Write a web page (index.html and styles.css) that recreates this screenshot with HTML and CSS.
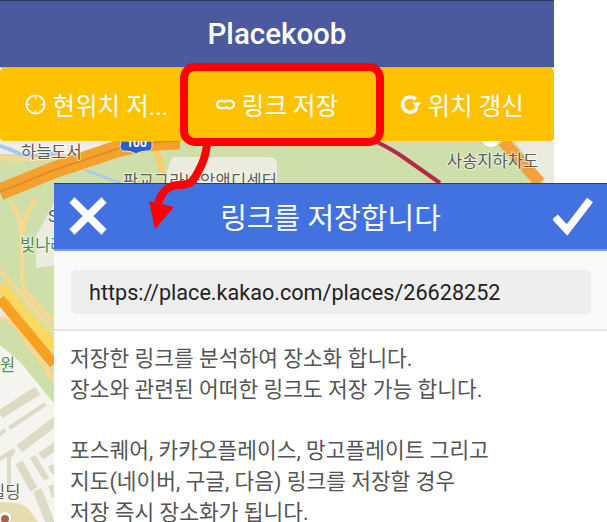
FILE: index.html
```html
<!DOCTYPE html>
<html lang="ko">
  <head>
    <meta charset="UTF-8" />
    <title>Placekoob</title>
    <link rel="stylesheet" href="styles.css">
  </head>
  <body>
    <main class="screen">
      <section class="app">
        <header class="app-header">Placekoob</header>

        <nav class="toolbar">
          <button class="tool tool-first">
            <svg class="tool-icon" viewBox="0 0 22 22" fill="none" stroke="#fff">
              <circle cx="11" cy="11" r="9.500" stroke-width="1.800" />
              <path d="M11 1v4M11 17v4M1 11h4M17 11h4" stroke-width="1.600" />
            </svg>
            <span>현위치 저...</span>
          </button>
          <button class="tool">
            <svg class="tool-icon link-icon" viewBox="0 0 18 10" fill="none" stroke="#fff" stroke-width="2.200">
              <path d="M8 1.500H4.500a3.500 3.500 0 0 0 0 7H8a3 3 0 0 0 2.500-2" />
              <path d="M10 8.500h3.500a3.500 3.500 0 0 0 0-7H10a3 3 0 0 0-2.500 2" />
            </svg>
            <span>링크 저장</span>
          </button>
          <button class="tool">
            <svg class="tool-icon" viewBox="0 0 22 22" fill="none">
              <path d="M16.500 5.500a8 8 0 1 0 1.500 9" stroke="#fff" stroke-width="3.600" />
              <path d="M13 9h9l-4.500 6z" fill="#fff" />
            </svg>
            <span>위치 갱신</span>
          </button>
        </nav>

        <div class="map">
          <svg class="map-art" viewBox="0 141 554 381" preserveAspectRatio="none">
            <rect x="0" y="141" width="554" height="381" fill="#cfdfa9" />

            <!-- 지도 바탕 -->
            <path d="M0 141h125l-40 13H0z" fill="#eeeee6" />
            <path d="M0 146q10 3 20 8t40 -2" fill="none" stroke="#a9c8ee" stroke-width="4" />
            <path d="M85 170l35 13" fill="none" stroke="#a9c8ee" stroke-width="2.500" />
            <path d="M172 157h97q8 0 8 8v18H163z" fill="#ecebe0" />
            <path d="M515 141h39v42h-10z" fill="#ecebe0" />
            <path d="M54 203 36 236v32q10-2 18-2z" fill="#ecebe0" />
            <path d="M0 345l20 17 34 41v119H0z" fill="#f5f4ee" />
            <path d="M0 502q20 0 28 6l10 14H0z" fill="#e6dcb2" />
            <path d="M0 304q6 8 14 17l-14-3z" fill="#e7e7df" />

            <!-- 도로 -->
            <g fill="none" stroke="#fbd78e" stroke-width="4">
              <path d="M0 158q40 4 100-6" />
              <path d="M10 200q12 18 12 40v30q0 14 4 22l28 30" />
              <path d="M36 198q-14 20-14 42" />
              <path d="M0 270l54 62" />
              <path d="M0 318q10 2 16 8l38 54" />
            </g>
            <path d="M154 141l9 34" fill="none" stroke="#f3cf72" stroke-width="7" />

            <path d="M0 192 54 170 120 148q30-7 60-7" fill="none" stroke="#f6a02e" stroke-width="17" />
            <path d="M0 192 54 170 120 148q30-7 60-7" fill="none" stroke="#d98a26" stroke-width="1.500" />
            <path d="M0 286l54 61" fill="none" stroke="#fbd85e" stroke-width="11" />
            <path d="M0 299l54 65" fill="none" stroke="#f7a021" stroke-width="10" />

            <path d="M377 142q16 8 26 15l37 26" fill="none" stroke="#b42a45" stroke-width="4" />
            <path d="M503 141l37 42" fill="none" stroke="#f4a238" stroke-width="12" />
            <circle cx="491" cy="138" r="9" fill="#fff" />

            <!-- 블록 -->
            <g fill="none" stroke-linecap="square" class="blocks">
              <path d="M4 412l30-19" stroke-width="9" />
              <path d="M11 427l33-22" stroke-width="4" />
              <path d="M23 446l30-23" stroke-width="9" />
              <path d="M44 454l10-7" stroke-width="8" />
              <path d="M0 434l4-3" stroke-width="4" />
              <path d="M0 459l14-9-5 8v30" stroke-width="4" />
              <path d="M21 466l11 20" stroke-width="8" />
              <path d="M34 459l11 18" stroke-width="6" />
              <path d="M39 494l11 28" stroke-width="9" />
              <path d="M52 468l2 3" stroke-width="6" />
              <path d="M52 488l2 6" stroke-width="6" />
            </g>
            <circle cx="5" cy="518" r="6" fill="#fff" />
            <circle cx="5" cy="519" r="4" fill="#a8654a" />

            <g class="map-label">
              <text x="21" y="158">하늘도서</text>
              <text x="123" y="187" textLength="154">판교그라나앙앤디센터</text>
              <text x="447" y="167">사송지하차도</text>
              <text x="48" y="222">S</text>
              <text x="-10" y="498">빌딩</text>
            </g>
            <g class="map-label map-green">
              <text x="20" y="251">빛나래</text>
              <text x="0" y="371">원</text>
            </g>
            <path d="M121 141h31v6q0 3-3 4-9 0-13 3-4-3-13-3-3-1-3-4z" fill="#2f5fc0" stroke="#dfe6f5" />
            <text class="shield" x="136.500" y="147">100</text>
          </svg>
        </div>
      </section>

      <section class="dialog">
        <header class="dialog-header">
          <svg class="dialog-icon" viewBox="0 0 40 40" stroke="#fff" stroke-width="7.500">
            <path d="M4 4l32 32M36 4 4 36" />
          </svg>
          <h1>링크를 저장합니다</h1>
          <svg class="dialog-icon" viewBox="0 0 40 40" fill="none" stroke="#fff" stroke-width="7.500">
            <path d="M2 21l12 13L37 4" />
          </svg>
        </header>
        <div class="url-row">
          <div class="url-box">https://place.kakao.com/places/26628252</div>
        </div>
        <div class="dialog-body">
          <p>저장한 링크를 분석하여 장소화 합니다.<br>장소와 관련된 어떠한 링크도 저장 가능 합니다.</p>
          <p>포스퀘어, 카카오플레이스, 망고플레이트 그리고<br>지도(네이버, 구글, 다음) 링크를 저장할 경우<br>저장 즉시 장소화가 됩니다.</p>
        </div>
      </section>

      <!-- 빨간 강조 표시 -->
      <div class="callout"></div>
      <svg class="callout-arrow" viewBox="0 0 607 522">
        <path d="M207 145q-2 14-7 23-5 11-10 15-5 2-13 2-9 1-14 8-3 4-5 10" fill="none" stroke="#f00" stroke-width="8" />
        <polygon points="149,201 174,207 155,229" fill="#f00" />
      </svg>
    </main>
  </body>
</html>
```

FILE: styles.css
```css
* {
  box-sizing: border-box;
}

html,
body {
  margin: 0;
  height: 100%;
  background: #fff;
  overflow: hidden;
}

body {
  font-family: Roboto, "Noto Sans CJK KR", sans-serif;
}

.screen {
  position: relative;
  width: 607px;
  height: 522px;
  overflow: hidden;
}

.app {
  display: flex;
  flex-direction: column;
  width: 554px;
  height: 522px;
}

.app-header {
  flex: none;
  height: 68px;
  display: flex;
  align-items: center;
  justify-content: center;
  background: #4b599f;
  border-top: 1px solid #2f3659;
  border-bottom: 1px solid #b9b9b0;
  color: #fff;
  font-size: 29.500px;
  font-weight: 500;
}

.toolbar {
  flex: none;
  display: grid;
  grid-template-columns: repeat(3, 1fr);
  height: 73px;
  background: #ffc200;
  border-radius: 4px;
}

.tool {
  min-width: 0;
  display: flex;
  align-items: center;
  justify-content: center;
  gap: 7px;
  padding: 0;
  background: none;
  border: none;
  color: #fff;
  font-family: inherit;
  font-size: 24.500px;
  white-space: nowrap;
}

.tool-first {
  padding-left: 8px;
}

.tool-icon {
  width: 21px;
  height: 21px;
}

.link-icon {
  width: 19px;
  height: 11px;
}

.map {
  flex: none;
  height: 381px;
  overflow: hidden;
}

.map-art {
  display: block;
  width: 554px;
  height: 381px;
}

.blocks {
  stroke: #dcdbc6;
}

.map-label text {
  font-size: 16.500px;
  fill: #5b5b55;
  stroke: #fff;
  stroke-width: 2px;
  stroke-opacity: 0.6;
  paint-order: stroke;
}

.map-green text {
  fill: #4f8a4f;
}

.shield {
  font-size: 12px;
  font-weight: 700;
  fill: #fff;
  text-anchor: middle;
}

.dialog {
  position: absolute;
  left: 54px;
  top: 183px;
  width: 553px;
  height: 339px;
  background: #fff;
  overflow: hidden;
}

.dialog-header {
  height: 68px;
  padding: 0 14px 2px;
  display: flex;
  align-items: center;
  justify-content: space-between;
  background: #4272e0;
  border-top: 1px solid #2b3f73;
  border-bottom: 2px solid #7d9ce6;
}

.dialog-header h1 {
  margin: 0;
  color: #fff;
  font-size: 29px;
  font-weight: 400;
}

.dialog-icon {
  width: 40px;
  height: 40px;
}

.url-row {
  height: 80px;
  padding: 19px 16px 0 17px;
  background: #f9f9f9;
  border-bottom: 2px solid #e4e4e4;
}

.url-box {
  height: 44px;
  padding-left: 18px;
  display: flex;
  align-items: center;
  background: #eeeeee;
  border-radius: 5px;
  color: #222;
  font-size: 21.600px;
}

.dialog-body {
  padding: 13px 16px;
  color: #555;
  font-size: 21.450px;
  line-height: 30.800px;
}

.dialog-body p {
  margin: 0 0 30.800px;
}

.callout {
  position: absolute;
  left: 180px;
  top: 63px;
  width: 204px;
  height: 83px;
  border: 8px solid #f00;
  border-radius: 15px;
}

.callout-arrow {
  position: absolute;
  left: 0;
  top: 0;
  width: 607px;
  height: 522px;
}
```
